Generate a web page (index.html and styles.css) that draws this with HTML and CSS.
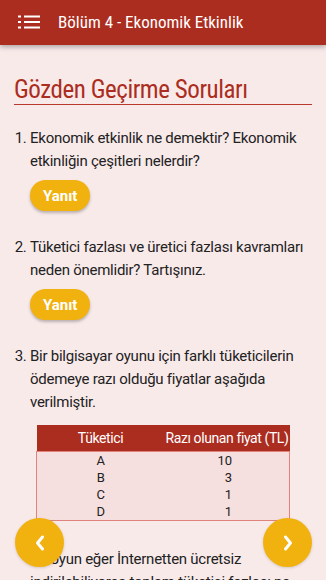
FILE: index.html
```html
<!DOCTYPE html>
<html lang="tr">
<head>
<meta charset="utf-8">
<title>Bölüm 4 - Ekonomik Etkinlik</title>
<link rel="stylesheet" href="styles.css">
</head>
<body>
<header class="appbar">
  <svg class="menu-icon" width="22" height="14" viewBox="0 0 22 14" aria-hidden="true">
    <rect x="0" y="0.5" width="3" height="2" fill="#fff"/>
    <rect x="6" y="0.5" width="16" height="2" fill="#fff"/>
    <rect x="0" y="6" width="3" height="2" fill="#fff"/>
    <rect x="6" y="6" width="16" height="2" fill="#fff"/>
    <rect x="0" y="11.5" width="3" height="2" fill="#fff"/>
    <rect x="6" y="11.5" width="16" height="2" fill="#fff"/>
  </svg>
  <span class="appbar-title">Bölüm 4 - Ekonomik Etkinlik</span>
</header>
<main class="content">
  <h1 class="section-title">Gözden Geçirme Soruları</h1>
  <ol class="questions">
    <li class="question">
      <p class="q-text">Ekonomik etkinlik ne demektir? Ekonomik etkinliğin çeşitleri nelerdir?</p>
      <button class="answer-btn">Yanıt</button>
    </li>
    <li class="question">
      <p class="q-text">Tüketici fazlası ve üretici fazlası kavramları neden önemlidir? Tartışınız.</p>
      <button class="answer-btn">Yanıt</button>
    </li>
    <li class="question">
      <p class="q-text">Bir bilgisayar oyunu için farklı tüketicilerin ödemeye razı olduğu fiyatlar aşağıda verilmiştir.</p>
      <table class="price-table">
        <thead>
          <tr><th class="col-a">Tüketici</th><th class="col-b">Razı olunan fiyat (TL)</th></tr>
        </thead>
        <tbody>
          <tr><td>A</td><td class="num">10</td></tr>
          <tr><td>B</td><td class="num">3</td></tr>
          <tr><td>C</td><td class="num">1</td></tr>
          <tr><td>D</td><td class="num">1</td></tr>
        </tbody>
      </table>
      <p class="q-text after-table">Bu oyun eğer İnternetten ücretsiz indirilebiliyorsa toplam tüketici fazlası ne olur?</p>
    </li>
  </ol>
</main>
<button class="nav-btn nav-prev" aria-label="Önceki">
  <svg width="12" height="18" viewBox="0 0 12 18"><path d="M8.5 3 L3.5 9 L8.5 15" fill="none" stroke="#fff" stroke-width="3" stroke-linecap="round" stroke-linejoin="round"/></svg>
</button>
<button class="nav-btn nav-next" aria-label="Sonraki">
  <svg width="12" height="18" viewBox="0 0 12 18"><path d="M3.5 3 L8.5 9 L3.5 15" fill="none" stroke="#fff" stroke-width="3" stroke-linecap="round" stroke-linejoin="round"/></svg>
</button>
</body>
</html>
```
FILE: styles.css
```css
html, body {
  margin: 0;
  padding: 0;
}
body {
  background: #f9eaea;
  font-family: Roboto, "Noto Sans", sans-serif;
  color: #222;
  overflow: hidden;
}
.appbar {
  height: 45px;
  background: #ab2d20;
  display: flex;
  align-items: center;
  padding-left: 18px;
  gap: 18px;
  box-shadow: 0 2px 5px rgba(0,0,0,0.3);
  position: relative;
  z-index: 2;
}
.menu-icon {
  display: block;
  margin-top: -1px;
}
.appbar-title {
  color: #fff;
  font-family: "Roboto Condensed", Roboto, sans-serif;
  font-size: 17px;
  margin-top: -1px;
}
.content {
  padding: 31px 14px 0 14px;
}
.section-title {
  margin: 0;
  font-family: "Roboto Condensed", Roboto, sans-serif;
  font-weight: 400;
  font-size: 25px;
  letter-spacing: -0.45px;
  line-height: 28px;
  color: #ab2d20;
  border-bottom: 1px solid #b9392c;
}
.questions {
  margin: 22px 0 0 0;
  padding-left: 16px;
  font-size: 15px;
  letter-spacing: -0.25px;
  line-height: 23px;
}
.question {
  margin-bottom: 25px;
}
.q-text {
  margin: 0;
}
.answer-btn {
  margin-top: 7px;
  height: 31px;
  padding: 0 13px;
  border: none;
  border-radius: 16px;
  background: #f1b10f;
  color: #fff;
  font-family: Roboto, sans-serif;
  font-weight: 700;
  font-size: 15px;
  box-shadow: 0 2px 3px rgba(0,0,0,0.25);
}
.price-table {
  margin: 11px 0 0 6px;
  width: 254px;
  border-collapse: collapse;
  font-size: 13px;
  letter-spacing: 0;
  table-layout: fixed;
}
.price-table th {
  background: #ab2d20;
  color: #fff;
  font-weight: 400;
  font-size: 14px;
  letter-spacing: -0.4px;
  height: 26px;
  padding: 0;
  white-space: nowrap;
}
.price-table th.col-a {
  width: 128px;
}
.price-table tbody {
  background: #f5dfdf;
  border: 1px solid #e0847b;
}
.price-table td {
  text-align: center;
  padding: 0;
  height: 17px;
  line-height: 17px;
}
.price-table td.num {
  text-align: right;
  padding-right: 57px;
}
.after-table {
  margin-top: 27px;
}
.nav-btn {
  position: fixed;
  bottom: 13px;
  width: 49px;
  height: 49px;
  border-radius: 50%;
  border: none;
  background: #f1b10f;
  display: flex;
  align-items: center;
  justify-content: center;
  padding: 0;
  box-shadow: 0 1px 3px rgba(0,0,0,0.15);
}
.nav-prev {
  left: 15px;
}
.nav-next {
  right: 14px;
}
```
